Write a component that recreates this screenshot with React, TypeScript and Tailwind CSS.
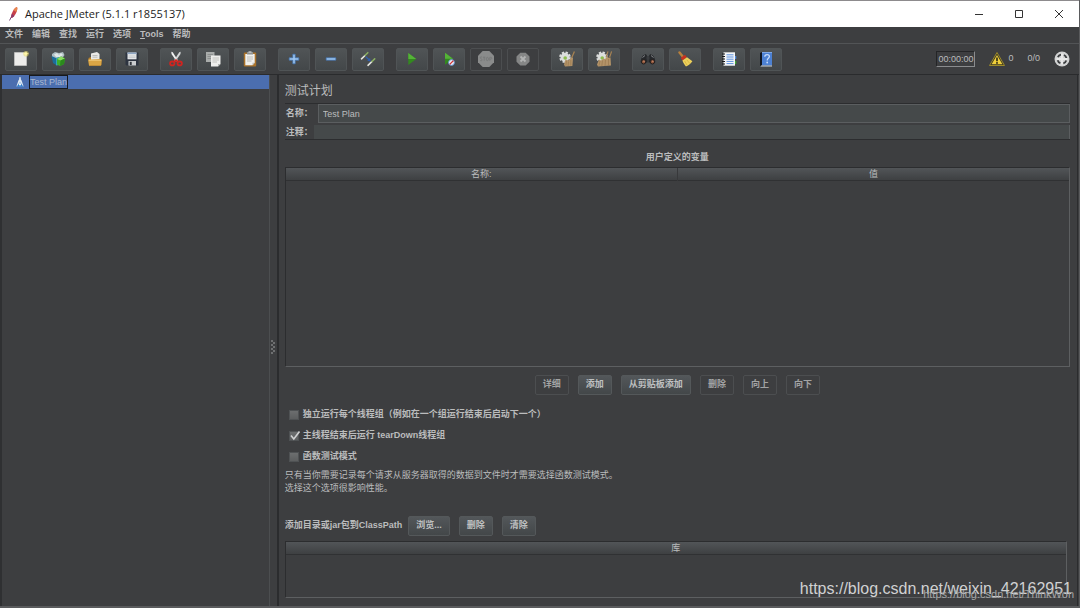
import { useState, type ReactNode } from "react";
import { clsx } from "clsx";

const MENUS = ["文件", "编辑", "查找", "运行", "选项", "Tools", "帮助"];

/* ---------- icons ---------- */

function Icon({ children }: { children: ReactNode }) {
  return (
    <svg viewBox="0 0 16 16" className="size-4" aria-hidden="true">
      {children}
    </svg>
  );
}

const FeatherIcon = () => (
  <svg viewBox="0 0 12 16" className="h-4 w-3" aria-hidden="true">
    <path d="M1.5 14.5 4 9.5" stroke="#7a4a7c" strokeWidth="1" fill="none" />
    <path d="M9 1c.8 1.400 0 4.500-1.300 6.800C6.600 10.200 5 11.600 3.200 12c-.2-2 .4-4.800 1.900-7.300C6.200 2.800 7.600 1.400 9 1z" fill="#c8404a" />
    <path d="M9 1c.8 1.400 0 3.500-.8 5L5.600 4C6.600 2.400 7.800 1.300 9 1z" fill="#e8864c" />
    <path d="M3.200 12c-.1-1.300.1-2.900.7-4.500l2.500 2.600C5.400 11.200 4.400 11.800 3.200 12z" fill="#8c3a6a" />
  </svg>
);

const NewIcon = () => (
  <Icon>
    <path d="M1.500 1.500h12v13h-12z" fill="#ececea" />
    <path d="M1.500 1.500h12v13h-12z" fill="none" stroke="#c9c9c7" strokeWidth=".7" />
    <circle cx="13" cy="2.800" r="2.800" fill="#e9dc6a" opacity=".55" />
    <path d="m13 0 .7 2.100 2.200.7-2.200.7L13 5.600l-.7-2.100-2.200-.7 2.200-.7z" fill="#fff6a8" />
  </Icon>
);

const TemplatesIcon = () => (
  <Icon>
    <path d="m2 3 3-2 4 1 4-1 1.500 3-2 3-7 1L2 6z" fill="#aebdc2" />
    <path d="m4 3.500 3-1.500 2 2 2-2 2 2-3 2H6z" fill="#dfe7e8" />
    <path d="m1.500 5 4.500 2v7L3 12z" fill="#1c6d9a" />
    <path d="m6 7 3-1v8l-3 .5z" fill="#35a3b8" />
    <path d="m7 8 4-2.500L15 7.500 14 13l-4 2-3-1.500z" fill="#3fae2a" />
    <path d="m7 8 4-2.500 4 2-4.500 2z" fill="#8bdc62" />
    <path d="M10.500 9.500 15 7.500 14 13l-4 2z" fill="#2b8a1c" />
  </Icon>
);

const OpenIcon = () => (
  <Icon>
    <path d="M4 2.500 10 1l2.500 2v6H4z" fill="#e9e9e6" />
    <path d="M5.500 4.500h5M5.500 6.200h5" stroke="#a9aaa8" strokeWidth=".7" />
    <path d="M1.500 7 4 6v3l9.500-1 1 1v5l-1 .8H2z" fill="#b9822a" />
    <path d="M1.200 8.500h13.600l-.8 6H2z" fill="#dba645" />
    <path d="M1.800 9.200h12.400" stroke="#f7d890" strokeWidth=".8" />
  </Icon>
);

const SaveIcon = () => (
  <Icon>
    <path d="M1.500 1.500h13v13h-12l-1-1z" fill="#2d3440" />
    <path d="M3.500 1.500h9v6.800h-9z" fill="#e6e8ea" />
    <path d="M3.500 1.500h9v1.600h-9z" fill="#8fa7c4" />
    <path d="M4.500 5h7M4.500 6.600h7" stroke="#b5b9bd" strokeWidth=".6" />
    <path d="M4.500 10h7.500v4.500H4.500z" fill="#c9ccce" />
    <path d="M5.700 10.800h2v3.200h-2z" fill="#30343b" />
  </Icon>
);

const CutIcon = () => (
  <Icon>
    <path d="m3.300.8 1.500.4L10 9.600l-1.400.8L3.500 3z" fill="#f0f1f1" />
    <path d="m12.700.8-1.500.4L6 9.600l1.400.8L12.500 3z" fill="#d4d7d8" />
    <g fill="none" stroke="#cf2420" strokeWidth="1.800">
      <ellipse cx="4.300" cy="12.400" rx="2.200" ry="1.900" />
      <ellipse cx="11.700" cy="12.400" rx="2.200" ry="1.900" />
      <path d="m6 10.800 2-1.600 2 1.600" />
    </g>
  </Icon>
);

const CopyIcon = () => (
  <Icon>
    <path d="M1 1h8.500v10H1z" fill="#a9acab" />
    <path d="M2.500 3.500H8M2.500 5.500H8M2.500 7.500H8" stroke="#858887" strokeWidth=".8" />
    <path d="M6 4.500h9.500V13l-2.500 2.500H6z" fill="#eeeeec" />
    <path d="M7.500 7H14M7.500 9H14M7.500 11H12" stroke="#b4b5b3" strokeWidth=".8" />
    <path d="M15.500 13H13v2.500z" fill="#b0b2b0" />
  </Icon>
);

const PasteIcon = () => (
  <Icon>
    <rect x="1.800" y="1.500" width="12.400" height="14" rx="1" fill="#a9722a" />
    <path d="M3.300 3h9.400v8.800l-2.200 2.400H3.300z" fill="#f0f0ed" />
    <path d="M5 1h6v2.500H5z" fill="#8d9090" />
    <path d="M6.500.3h3v1.500h-3z" fill="#c5c7c7" />
    <path d="M5 6h6M5 8h6M5 10h4.500" stroke="#aeafad" strokeWidth=".8" />
    <path d="M12.700 11.800h-2.200v2.400z" fill="#b9bab6" />
  </Icon>
);

const PlusIcon = () => (
  <Icon>
    <path d="M6.800 3.200h2.400v3.600h3.600v2.400H9.200v3.600H6.800V9.200H3.200V6.800h3.600z" fill="#9cc4ee" stroke="#3f73b4" strokeWidth=".7" />
  </Icon>
);

const MinusIcon = () => (
  <Icon>
    <path d="M3.200 6.800h9.600v2.400H3.200z" fill="#9cc4ee" stroke="#3f73b4" strokeWidth=".7" />
  </Icon>
);

const ToggleIcon = () => (
  <Icon>
    <path d="M1.500 7.800 5 4.500" stroke="#e4e5df" strokeWidth="1.600" strokeLinecap="round" />
    <path d="m5.200 4.300 2.600-2.600" stroke="#8aae62" strokeWidth="1.600" strokeLinecap="round" />
    <path d="m8 14.300 3.800-3.600" stroke="#e4e5df" strokeWidth="1.600" strokeLinecap="round" />
    <path d="m12 10.500 2.700-2.600" stroke="#8aae62" strokeWidth="1.600" strokeLinecap="round" />
    <path d="m5.800 5.800 3.800 3.400" stroke="#2f5eae" strokeWidth="1.300" />
    <path d="m10.800 10.400-3.600-.6 2.800-2.900z" fill="#2f5eae" />
  </Icon>
);

const StartIcon = () => (
  <Icon>
    <path d="m4.300 2 8 6-8 6z" fill="#33891f" />
    <path d="m4.300 2 8 6h-8z" fill="#55b338" />
  </Icon>
);

const StartNoPauseIcon = () => (
  <Icon>
    <path d="m4 1.800 8 6-8 6z" fill="#33891f" />
    <path d="m4 1.800 8 6H4z" fill="#55b338" />
    <circle cx="10.500" cy="11.500" r="2.900" fill="#e9eef5" stroke="#5c8fd0" strokeWidth=".9" />
    <path d="m8.700 13.400 3.700-3.800" stroke="#d32f2f" strokeWidth="1.300" />
  </Icon>
);

const StopIcon = () => (
  <Icon>
    <path d="M4.700 0h6.600L16 4.700v6.600L11.300 16H4.700L0 11.300V4.700z" fill="#8a8b8b" />
    <g fill="none" stroke="#777878" strokeWidth=".9">
      <path d="M4.200 6.200c-.8-.5-2-.3-2 .5 0 1.200 2 1 2 2.200 0 .9-1.300 1.100-2.100.5M5 6.200h2.400M6.200 6.200v3.500" />
      <ellipse cx="9.300" cy="8" rx="1.100" ry="1.700" />
      <path d="M11.800 9.800V6.300h1c1.300 0 1.300 1.900 0 1.900h-1" />
    </g>
  </Icon>
);

const ShutdownIcon = () => (
  <Icon>
    <path d="M5.300 1.700h5.400l3.800 3.800v5.200l-3.800 3.800H5.300l-3.800-3.800V5.500z" fill="#858686" />
    <path d="m5.500 5.500 5 5m0-5-5 5" stroke="#b2b3b3" strokeWidth="1.800" />
  </Icon>
);

function Gear() {
  return (
    <>
      <circle cx="6" cy="6.200" r="4.800" fill="none" stroke="#dcdedd" strokeWidth="2" strokeDasharray="2.300 1.470" />
      <circle cx="6" cy="6.200" r="4.400" fill="#dcdedd" />
      <circle cx="6.200" cy="7" r="1.800" fill="#8dbd50" />
    </>
  );
}

const ClearIcon = () => (
  <Icon>
    <Gear />
    <path d="m15.400.4-2.600 6.200" stroke="#a88353" strokeWidth="1.300" />
    <path d="m6.500 8.500 3 1L12.800 6l1.200 1-.6 8L6 15.500l-1-2z" fill="#b39368" />
    <path d="m7.500 10-.7 4.500m2.700-4-.4 4.500m2.700-6v5.500" stroke="#94744b" strokeWidth=".6" />
  </Icon>
);

const ClearAllIcon = () => (
  <Icon>
    <Gear />
    <path d="m12 .4-2 6M15.600.4l-2 6" stroke="#a88353" strokeWidth="1.200" />
    <path d="m3 8.500 2 1 2.500-2L9 8l2.500-2.500 1.300 1.500 1.700-.5.5 8L2 15.500l-1-2z" fill="#b39368" />
    <path d="m4 10-1 4.500m3.500-5-.7 5.500M9.500 9 9 15m3.500-7v6.500" stroke="#94744b" strokeWidth=".6" />
  </Icon>
);

const SearchIcon = () => (
  <Icon>
    <path d="M3 4.500 5.800 3l1.700 2.500v6H.8C.4 9 1.600 6.500 3 4.500z" fill="#26282b" />
    <path d="M13 4.500 10.200 3 8.500 5.500v6h6.700c.4-2.500-.8-5-2.200-7z" fill="#26282b" />
    <path d="M6.500 5.500h3v3h-3z" fill="#3a3d40" />
    <path d="m2.500 6.500 2.500-2M13.500 6.500 11 4.500" stroke="#85888b" strokeWidth="1" />
    <circle cx="3.600" cy="10.800" r="2.200" fill="#8a5439" stroke="#1c1d1f" strokeWidth="1" />
    <circle cx="12.400" cy="10.800" r="2.200" fill="#8a5439" stroke="#1c1d1f" strokeWidth="1" />
    <circle cx="4" cy="10.400" r=".8" fill="#c08468" />
    <circle cx="12.800" cy="10.400" r=".8" fill="#c08468" />
  </Icon>
);

const BroomIcon = () => (
  <Icon>
    <path d="m2.500 1.500 3 3.800" stroke="#b8803c" strokeWidth="2.400" strokeLinecap="round" />
    <path d="m3.800 6.800 4.200-3 1.800 2.500-4.400 3.200z" fill="#c8321e" />
    <path d="m5.400 9.400 4.600-3.200c1.800 1.400 3.700 2.400 5.400 4-1.400 2.300-3.600 4-6.400 5.200C7.600 13.600 6.200 11.700 5.400 9.400z" fill="#ecd05a" />
    <path d="m7.600 10 2.400 4M9.800 8.800l3 3.700" stroke="#c9a236" strokeWidth=".6" />
  </Icon>
);

const FunctionHelperIcon = () => (
  <Icon>
    <path d="M13.500 5h1.800v3h-1.800z" fill="#4d86d8" />
    <path d="M13.500 10h1.800v3h-1.800z" fill="#3fa535" />
    <path d="M2.500 1.300h11.500v13.400H2.500z" fill="#f4f6f8" />
    <path d="M5.500 3.800h7M5.500 6h7M5.500 8.200h7M5.500 10.400h7M5.500 12.600h7" stroke="#5b90de" strokeWidth="1" />
    <path d="M1 3h3M1 5.500h3M1 8h3M1 10.500h3M1 13h3" stroke="#17181a" strokeWidth="1.200" />
  </Icon>
);

const HelpIcon = () => (
  <Icon>
    <path d="m2 2 2-1v13.500L2 15z" fill="#10151f" />
    <path d="M4 1h10v13.500H4z" fill="#4c80d2" />
    <path d="M4 1h10v1H4z" fill="#7fa8e6" />
    <path d="M3 14.500h11v.9H2.500z" fill="#cdd3da" />
    <path d="M6.800 5.800c0-3 4.600-2.800 4.600-.2 0 1.700-2.200 1.800-2.200 3.800" fill="none" stroke="#c5dafa" strokeWidth="1.300" />
    <circle cx="9.200" cy="11.500" r=".9" fill="#c5dafa" />
  </Icon>
);

const WarningIcon = () => (
  <svg viewBox="0 0 16 16" className="size-4" aria-hidden="true">
    <path d="M8 1.500 15.500 14.500H.5z" fill="#3c3823" stroke="#9c8a2b" strokeWidth="1" strokeLinejoin="round" />
    <path d="m8 4 5.400 9.300H2.600z" fill="#f0cf3a" />
    <path d="M8 6.500v3.800" stroke="#1d1b10" strokeWidth="1.500" />
    <circle cx="8" cy="11.900" r=".9" fill="#1d1b10" />
  </svg>
);

const ExpandIcon = () => (
  <svg viewBox="0 0 16 16" className="size-4" aria-hidden="true">
    <circle cx="8" cy="8" r="7.500" fill="#d2d3d3" />
    <circle cx="8" cy="8" r="4.500" fill="none" stroke="#3b3d3f" strokeWidth="1.800" strokeDasharray="4 3.070" strokeDashoffset="-1.500" />
    <path d="M8 2.500v11M2.500 8h11" stroke="#e8e8e8" strokeWidth="2" />
  </svg>
);

const TestPlanIcon = () => (
  <svg viewBox="0 0 10 14" className="h-3 w-2" aria-hidden="true">
    <path d="M4 1h2v2.500l1 1.500 2.500 7.500H.5L3 5l1-1.500z" fill="#dfe9f2" />
    <path d="M5 6.500 7.800 11 9.500 13h-9L2.200 11z" fill="#2d78c8" />
    <path d="M5 5.500 6.300 10 5 12l-1.300-2z" fill="#f4f8fb" />
  </svg>
);

/* ---------- shared pieces ---------- */

interface Tool {
  label: string;
  icon: ReactNode;
  disabled?: boolean;
}

const TOOL_GROUPS: Tool[][] = [
  [
    { label: "新建", icon: <NewIcon /> },
    { label: "模板", icon: <TemplatesIcon /> },
    { label: "打开", icon: <OpenIcon /> },
    { label: "保存", icon: <SaveIcon /> },
  ],
  [
    { label: "剪切", icon: <CutIcon /> },
    { label: "复制", icon: <CopyIcon /> },
    { label: "粘贴", icon: <PasteIcon /> },
  ],
  [
    { label: "展开", icon: <PlusIcon /> },
    { label: "收起", icon: <MinusIcon /> },
    { label: "切换", icon: <ToggleIcon /> },
  ],
  [
    { label: "启动", icon: <StartIcon /> },
    { label: "不停顿开始", icon: <StartNoPauseIcon /> },
    { label: "停止", icon: <StopIcon />, disabled: true },
    { label: "关闭", icon: <ShutdownIcon />, disabled: true },
  ],
  [
    { label: "清除", icon: <ClearIcon /> },
    { label: "清除全部", icon: <ClearAllIcon /> },
  ],
  [
    { label: "查找", icon: <SearchIcon /> },
    { label: "重置查找", icon: <BroomIcon /> },
  ],
  [
    { label: "函数助手", icon: <FunctionHelperIcon /> },
    { label: "帮助", icon: <HelpIcon /> },
  ],
];

function Button({ children, disabled }: { children: ReactNode; disabled?: boolean }) {
  return (
    <button
      type="button"
      disabled={disabled}
      className={clsx(
        "h-5 rounded-xs border px-[7px] font-bold",
        disabled
          ? "border-[#4c4e50] text-[#a2a3a4]"
          : "border-[#54585a] bg-linear-to-b from-[#53575a] to-[#434749] text-[#bfc0c1]",
      )}
    >
      {children}
    </button>
  );
}

function DataTable({ columns, label, className }: { columns: string[]; label: string; className?: string }) {
  return (
    <div className={clsx("border border-t-[#2c2d2f] border-r-[#5d5f61] border-b-[#5d5f61] border-l-[#2c2d2f]", className)}>
      <table aria-label={label} className="w-full table-fixed border-collapse">
        <thead>
          <tr className="h-3 border-b border-[#303133] bg-linear-to-b from-[#525558] to-[#3e4042]">
            {columns.map((column) => (
              <th key={column} className="border-r border-[#38393b] p-0 leading-3 font-normal last:border-r-0">
                {column}
              </th>
            ))}
          </tr>
        </thead>
      </table>
    </div>
  );
}

function CheckOption({ label, initial = false }: { label: string; initial?: boolean }) {
  const [checked, setChecked] = useState(initial);

  return (
    <label className="flex h-5 items-center gap-1 pl-1 font-bold">
      <span className="relative flex">
        <input
          type="checkbox"
          checked={checked}
          onChange={(e) => setChecked(e.target.checked)}
          className="size-2.5 appearance-none border border-[#4f5254] bg-linear-to-b from-[#6c6e6f] to-[#5c5e5f]"
        />
        {checked && (
          <svg viewBox="0 0 12 12" className="pointer-events-none absolute -top-px left-0 size-3" aria-hidden="true">
            <path d="m2 5.500 2.800 3.500L10.500 1.500" fill="none" stroke="#d0d1d2" strokeWidth="1.600" />
          </svg>
        )}
      </span>
      {label}
    </label>
  );
}

/* ---------- window areas ---------- */

function TitleBar() {
  return (
    <header className="flex h-[27px] items-center border-t border-[#8d8b8d] bg-white pl-2 text-black">
      <FeatherIcon />
      <h1 className="ml-[5px] flex-1 font-['Open_Sans','Noto_Sans',sans-serif] text-[11px] text-[#1c1c1c]">
        Apache JMeter (5.1.1 r1855137)
      </h1>
      <div className="flex items-center gap-4 pr-2">
        <button type="button" aria-label="最小化" className="flex size-6 items-center justify-center">
          <svg viewBox="0 0 8 8" className="size-2" stroke="#333" fill="none">
            <path d="M0 4.500h8" />
          </svg>
        </button>
        <button type="button" aria-label="最大化" className="flex size-6 items-center justify-center">
          <svg viewBox="0 0 8 8" className="size-2" stroke="#333" fill="none">
            <path d="M.5.5h7v7h-7z" />
          </svg>
        </button>
        <button type="button" aria-label="关闭窗口" className="flex size-6 items-center justify-center">
          <svg viewBox="0 0 8 8" className="size-2" stroke="#333" fill="none">
            <path d="m0 0 8 8M8 0 0 8" />
          </svg>
        </button>
      </div>
    </header>
  );
}

function ToolBar() {
  return (
    <div className="flex h-8 items-center border-t border-b border-t-[#525456] border-b-[#2a2b2d] pr-[9px] pl-[5px]">
      <div className="flex gap-3">
        {TOOL_GROUPS.map((group, i) => (
          <div key={i} className="flex gap-[5px]">
            {group.map((tool) => (
              <button
                key={tool.label}
                type="button"
                aria-label={tool.label}
                disabled={tool.disabled}
                className={clsx(
                  "flex h-[23px] w-8 items-center justify-center rounded-xs border",
                  tool.disabled
                    ? "border-[#4c4e50]"
                    : "border-[#505456] bg-linear-to-b from-[#505456] to-[#434749]",
                )}
              >
                {tool.icon}
              </button>
            ))}
          </div>
        ))}
      </div>
      <div className="ml-auto flex items-center">
        <output
          aria-label="运行时间"
          className="border border-t-[#242527] border-r-[#8a8c8e] border-b-[#8a8c8e] border-l-[#242527] px-px leading-[14px]"
        >
          00:00:00
        </output>
        <button type="button" aria-label="警告" className="ml-[14px] flex items-center gap-[3px]">
          <WarningIcon />0
        </button>
        <span className="mr-[14px] ml-[14px]">0/0</span>
        <ExpandIcon />
      </div>
    </div>
  );
}

function TestPlanPanel() {
  return (
    <main className="mr-px flex min-w-0 flex-1 flex-col border-r border-l-2 border-[#2b2c2e] pr-[7px] pb-2 pl-[6px]">
      <h2 className="pt-1.5 text-[12px] leading-5">测试计划</h2>

      <form className="mt-0.5 flex flex-col border-t border-b border-t-[#2c2d2f] border-b-[#2c2d2f]">
        <div className="flex h-[19px] items-center">
          <label htmlFor="plan-name" className="w-[33px] shrink-0 pl-px font-bold">名称：</label>
          <input
            id="plan-name"
            defaultValue="Test Plan"
            className="h-[19px] min-w-0 flex-1 border border-[#5b5e60] bg-[#45494a] px-1 outline-none"
          />
        </div>
        <div className="flex h-4 items-end">
          <label htmlFor="plan-comment" className="w-[29px] shrink-0 pl-px leading-[14px] font-bold">注释：</label>
          <input id="plan-comment" className="h-3.5 min-w-0 flex-1 border-r border-[#5b5e60] bg-[#45494a] px-1 outline-none" />
        </div>
      </form>

      <h3 className="mt-[11px] text-center leading-3 font-bold">用户定义的变量</h3>
      <DataTable columns={["名称:", "值"]} label="用户定义的变量" className="mt-1 min-h-20 flex-1" />

      <div className="mt-2 flex justify-center gap-[9px]">
        <Button disabled>详细</Button>
        <Button>添加</Button>
        <Button>从剪贴板添加</Button>
        <Button disabled>删除</Button>
        <Button disabled>向上</Button>
        <Button disabled>向下</Button>
      </div>

      <div className="mt-[10px] flex flex-col gap-px">
        <CheckOption label="独立运行每个线程组（例如在一个组运行结束后启动下一个）" />
        <CheckOption label="主线程结束后运行 tearDown线程组" initial />
        <CheckOption label="函数测试模式" />
      </div>
      <p className="mt-0.5 leading-[13px]">
        只有当你需要记录每个请求从服务器取得的数据到文件时才需要选择函数测试模式。
        <br />
        选择这个选项很影响性能。
      </p>

      <div className="mt-[21px] flex items-center">
        <span className="mr-1.5 font-bold">添加目录或jar包到ClassPath</span>
        <div className="flex gap-[9px]">
          <Button>浏览...</Button>
          <Button>删除</Button>
          <Button>清除</Button>
        </div>
      </div>
      <DataTable columns={["库"]} label="库" className="mt-[5px] mr-[3px] h-[57px]" />
    </main>
  );
}

export default function App() {
  return (
    <div className="relative flex min-h-screen flex-col overflow-hidden border-r border-b-2 border-[#5a5b5d] bg-[#3d3e40] font-['Liberation_Sans','Noto_Sans_CJK_SC',sans-serif] text-[9px] text-[#bbbcbd]">
      <TitleBar />
      <nav className="flex h-4 items-center gap-[9px] pl-[5px] font-bold">
        {MENUS.map((menu) => (
          <button key={menu} type="button">
            {menu === "Tools" ? (
              <>
                <span className="underline">T</span>ools
              </>
            ) : (
              menu
            )}
          </button>
        ))}
      </nav>
      <ToolBar />

      <div className="flex flex-1">
        <aside className="w-1/4 shrink-0 border-r border-l-2 border-[#4c4e50] border-l-[#2f3032]">
          <div role="tree" aria-label="测试计划">
            <div role="treeitem" aria-selected="true" className="flex h-3.5 items-center gap-[5px] bg-[#4b6eaf] pl-[14px]">
              <TestPlanIcon />
              <span className="border border-[#17191d] leading-3 text-[#a9b7cf]">Test Plan</span>
            </div>
          </div>
        </aside>
        <div className="flex w-[7px] shrink-0 items-center justify-center pt-3">
          <svg viewBox="0 0 4 14" className="h-3.5 w-1" aria-hidden="true">
            <path d="M0 1h2m0 2h2M0 5h2m0 2h2M0 9h2m0 2h2M0 13h2" stroke="#a0a1a2" strokeWidth="1" />
          </svg>
        </div>
        <TestPlanPanel />
      </div>

      <div className="pointer-events-none absolute right-[7px] bottom-[7px] text-[16px] leading-5 text-[#d0d1d2]">
        https://blog.csdn.net/weixin_42162951
      </div>
      <div className="pointer-events-none absolute right-[5px] bottom-1 text-[11px] leading-4 text-[#a5a6a7]">
        https://blog.csdn.net/ThinkWon
      </div>
    </div>
  );
}
